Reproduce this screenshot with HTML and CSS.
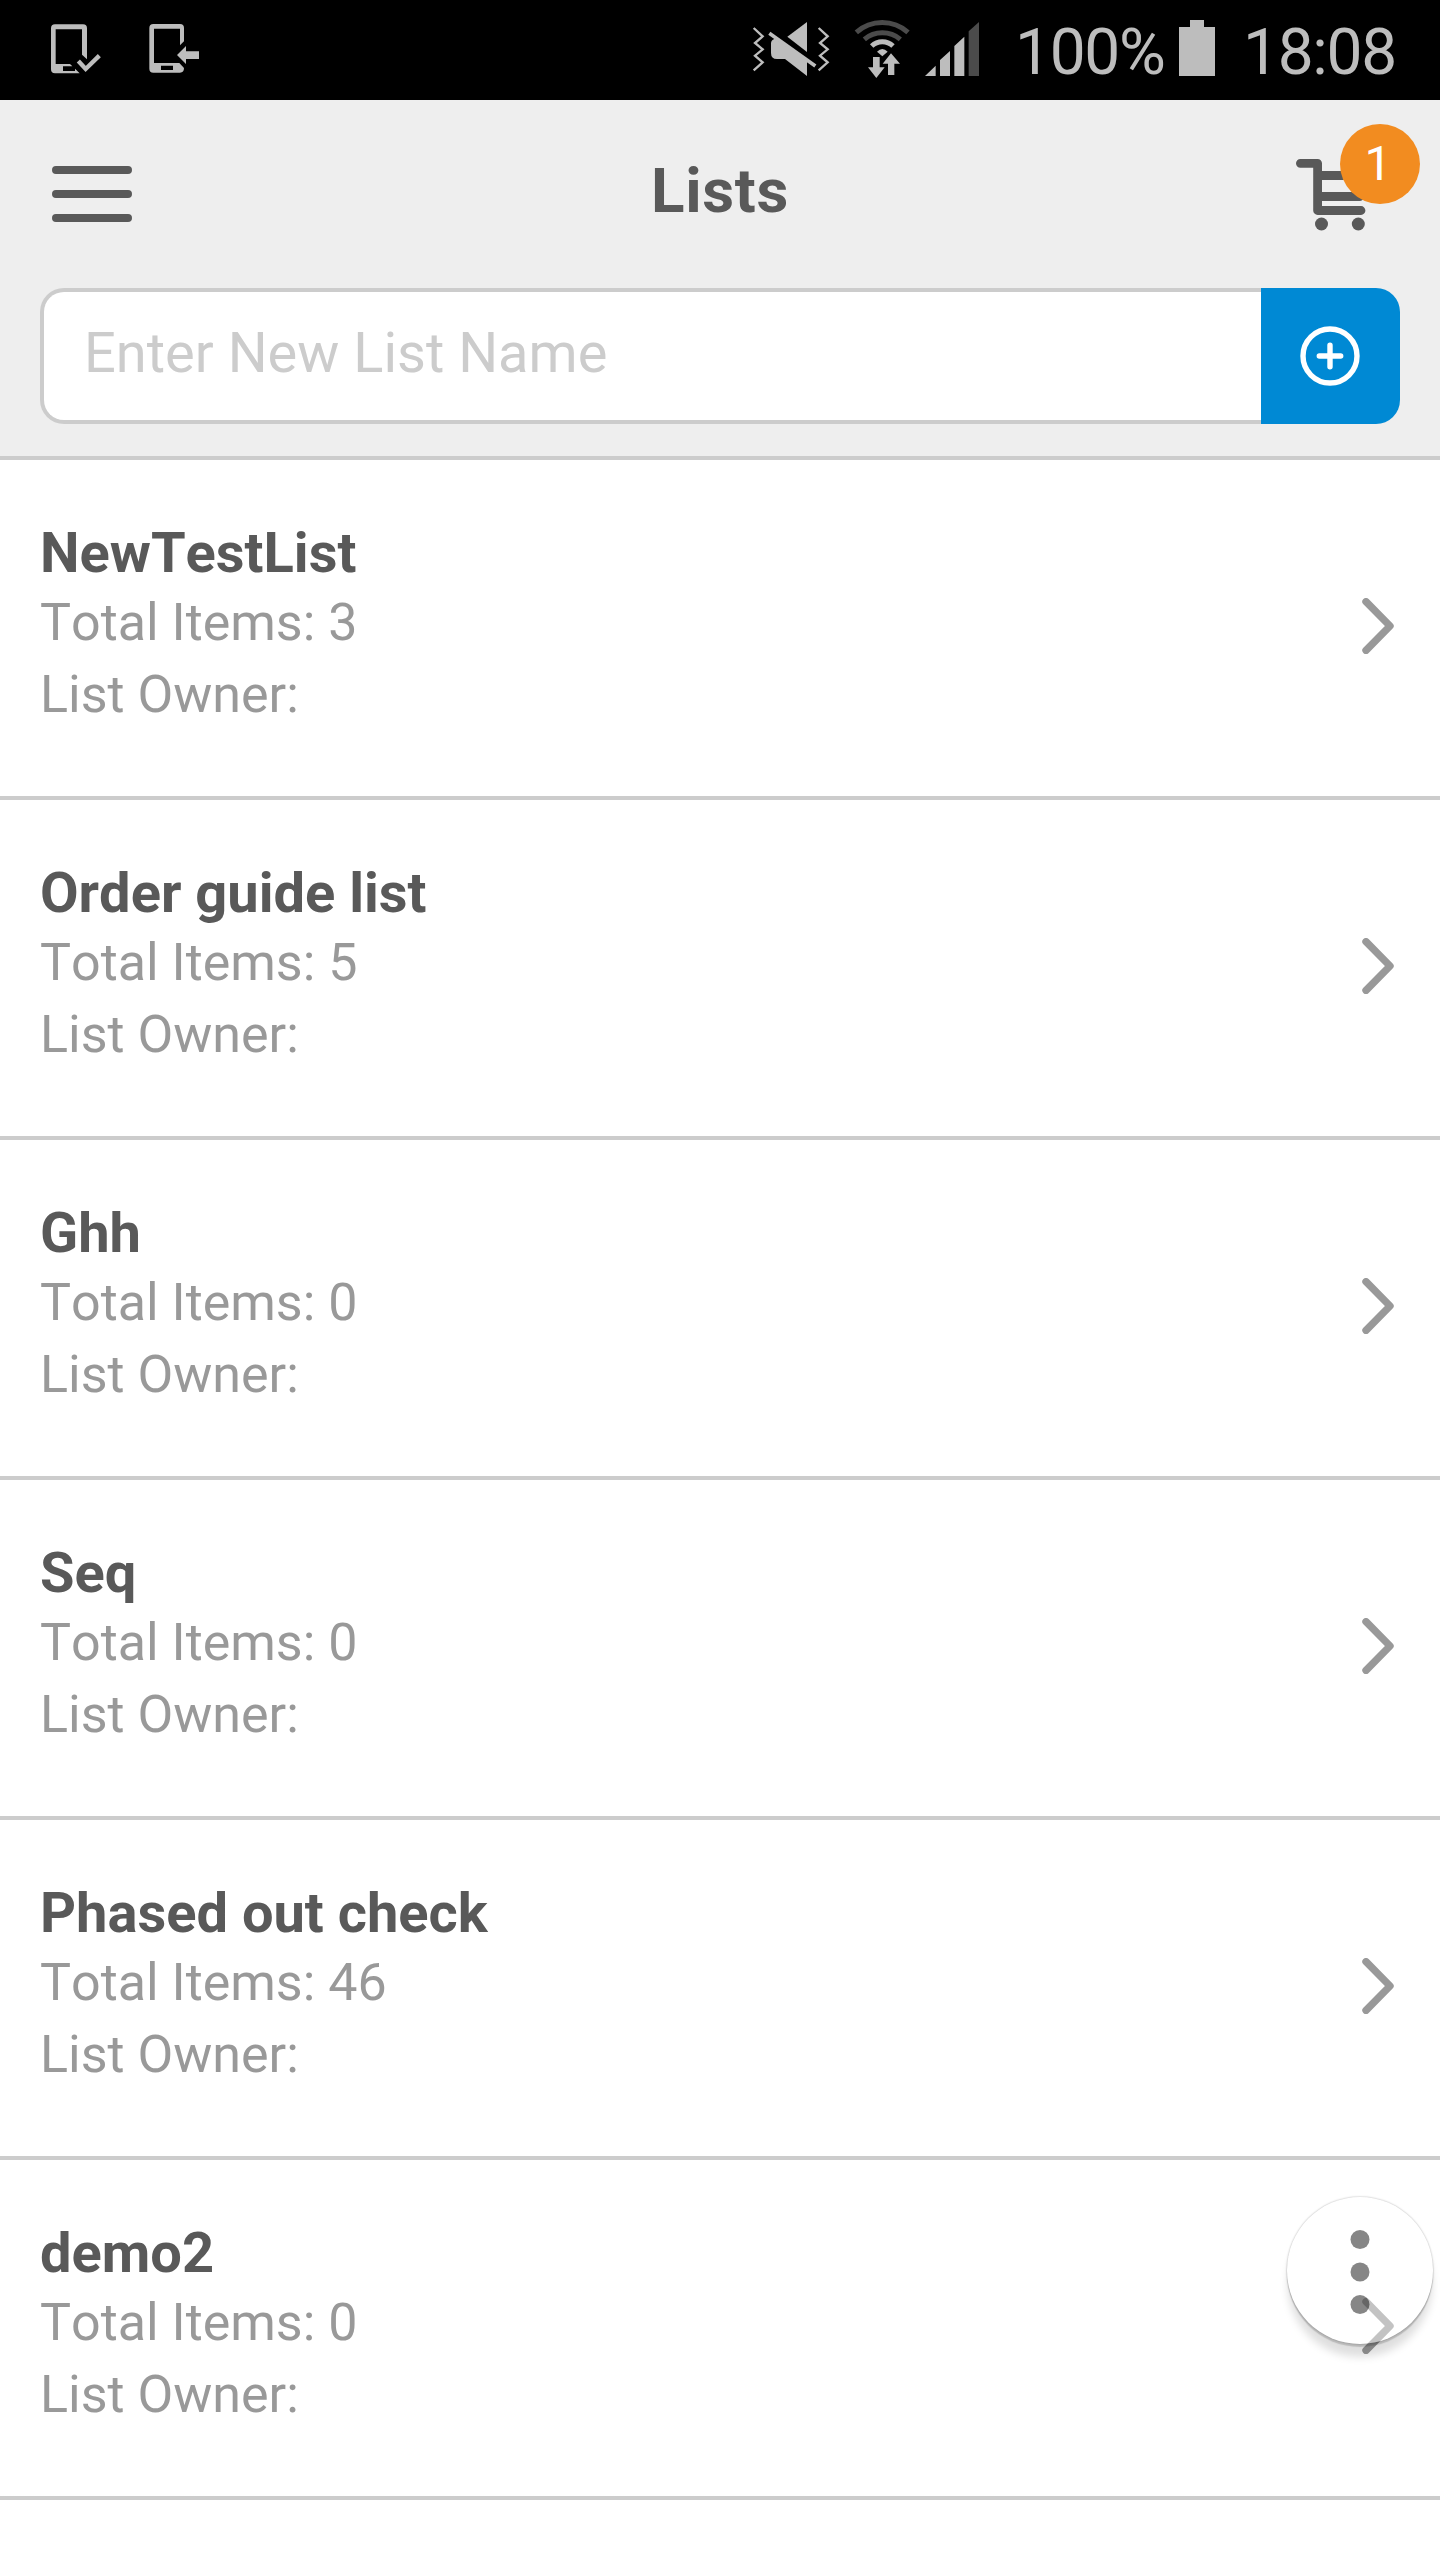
FILE: index.html
```
<!DOCTYPE html>
<html lang="en">
<head>
<meta charset="utf-8">
<title>Lists</title>
<link rel="stylesheet" href="styles.css">
</head>
<body>
<div class="statusbar">
  <svg class="status-icon phone-check" viewBox="150 54 156 186">
    <path fill-rule="evenodd" d="M165 73H249Q261 73 261 85V178L246 164V88H167V192H210L217 199H189V213H225V206L239 220H165Q153 220 153 208V85Q153 73 165 73Z"/>
    <path class="line" stroke-width="13" d="M235 183L257 207L298 167"/>
  </svg>
  <svg class="status-icon phone-arrow" viewBox="444 54 156 186">
    <path fill-rule="evenodd" d="M460 72H540Q552 72 552 84V124L540 136V86H462V189H538L552 204Q552 218 540 218H460Q448 218 448 206V84Q448 72 460 72ZM483 197V210H519V197Z"/>
    <path d="M531 165L558 138V154H597V177H558V192Z"/>
  </svg>
  <svg class="status-icon mute" viewBox="60 54 246 186">
    <path class="line" stroke-width="7" d="M71 84L98 109L75 129L98 148L75 167L98 187L71 211M266 84L293 109L270 129L293 148L270 167L293 187L266 211"/>
    <path d="M172 110L231 66V156Z"/>
    <path d="M135 116L231 182V228L165 177H141Q123 177 123 159V130Q123 119 135 116Z"/>
    <path class="line" stroke-width="11" d="M118 100L256 198"/>
  </svg>
  <svg class="status-icon wifi" viewBox="369 54 174 186">
    <path class="line dim" stroke-width="15" d="M379 97A116 116 0 0 1 534 97M403 118A84 84 0 0 1 511 118"/>
    <path class="line" stroke-width="15" d="M425 138A47 47 0 0 1 489 138"/>
    <path d="M441 155Q457 139 473 155L457 169Z"/>
    <path d="M429 171H449V202H464L439 234L414 202H429ZM483 160L510 191H493V225H474V191H458Z"/>
  </svg>
  <svg class="status-icon signal" viewBox="582 54 168 186">
    <path d="M585 228L617 197V228ZM630 228V180L660 153V228ZM673 228V138L703 110V228Z"/>
    <path class="dim-fill" d="M716 228V94L747 66V228Z"/>
  </svg>
  <span class="battery-level">100%</span>
  <svg class="status-icon battery" viewBox="534 54 114 186">
    <path d="M537 81H570V60H612V81H645V228H537Z"/>
  </svg>
  <span class="clock">18:08</span>
</div>

<header class="header">
  <div class="titlebar">
    <svg class="menu-icon" viewBox="0 0 80 56">
      <path d="M4 4H76M4 28H76M4 52H76"/>
    </svg>
    <h1 class="title">Lists</h1>
    <div class="cart">
      <svg class="cart-icon" viewBox="1296 156 74 76">
        <path class="cart-frame" d="M1300.4 163.3H1317.6V210.5H1361M1318 175.5H1365M1318 196.5H1360"/>
        <circle cx="1321.5" cy="224" r="6.5"/>
        <circle cx="1358.3" cy="224" r="6.5"/>
      </svg>
      <span class="badge">1</span>
    </div>
  </div>
  <form class="new-list">
    <input class="new-list-name" type="text" placeholder="Enter New List Name">
    <button class="add-button" type="button" aria-label="Add list">
      <svg class="add-icon" viewBox="0 0 60 60">
        <circle cx="30" cy="30" r="27"/>
        <path d="M19.3 30H40.7M30 19.3V40.7"/>
      </svg>
    </button>
  </form>
</header>

<main class="lists">
  <article class="row">
    <div><h2 class="name">NewTestList</h2><p class="meta">Total Items: 3</p><p class="meta">List Owner:</p></div>
    <svg class="chevron" viewBox="0 0 32 56"><path d="M4 3.7L28 28L4 52.3"/></svg>
  </article>
  <article class="row">
    <div><h2 class="name">Order guide list</h2><p class="meta">Total Items: 5</p><p class="meta">List Owner:</p></div>
    <svg class="chevron" viewBox="0 0 32 56"><path d="M4 3.7L28 28L4 52.3"/></svg>
  </article>
  <article class="row">
    <div><h2 class="name">Ghh</h2><p class="meta">Total Items: 0</p><p class="meta">List Owner:</p></div>
    <svg class="chevron" viewBox="0 0 32 56"><path d="M4 3.7L28 28L4 52.3"/></svg>
  </article>
  <article class="row">
    <div><h2 class="name">Seq</h2><p class="meta">Total Items: 0</p><p class="meta">List Owner:</p></div>
    <svg class="chevron" viewBox="0 0 32 56"><path d="M4 3.7L28 28L4 52.3"/></svg>
  </article>
  <article class="row">
    <div><h2 class="name">Phased out check</h2><p class="meta">Total Items: 46</p><p class="meta">List Owner:</p></div>
    <svg class="chevron" viewBox="0 0 32 56"><path d="M4 3.7L28 28L4 52.3"/></svg>
  </article>
  <article class="row">
    <div><h2 class="name">demo2</h2><p class="meta">Total Items: 0</p><p class="meta">List Owner:</p></div>
    <svg class="chevron" viewBox="0 0 32 56"><path d="M4 3.7L28 28L4 52.3"/></svg>
  </article>
</main>

<button class="fab" type="button" aria-label="More">
  <svg class="fab-dots" viewBox="0 0 20 86">
    <circle cx="10" cy="10.5" r="9.5"/>
    <circle cx="10" cy="43" r="9.5"/>
    <circle cx="10" cy="75.5" r="9.5"/>
  </svg>
</button>
</body>
</html>
```
FILE: styles.css
```
* { box-sizing: border-box; }

body {
  margin: 0;
  width: 1440px;
  height: 2560px;
  position: relative;
  overflow: hidden;
  background: #fff;
  font-family: Roboto, "Liberation Sans", sans-serif;
  font-kerning: none;
}

h1, h2, p { margin: 0; }

svg { display: block; flex: none; }

/* Status bar */
.statusbar {
  display: flex;
  align-items: flex-start;
  height: 100px;
  padding: 18px 0 0 50px;
  background: #000;
  color: #bdbdbd;
  font-size: 64px;
  line-height: 70px;
  letter-spacing: -1.3px;
}
.status-icon { height: 62px; fill: #bdbdbd; }
.status-icon .line { fill: none; stroke: #bdbdbd; }
.status-icon .dim { stroke: #4b4b4b; }
.status-icon .dim-fill { fill: #4b4b4b; }
.phone-check { width: 52px; }
.phone-arrow { width: 52px; margin-left: 46px; }
.mute { width: 82px; margin-left: auto; }
.wifi { width: 58px; margin-left: 21px; }
.signal { width: 56px; margin-left: 13px; }
.battery-level { width: 163px; margin-left: 35px; }
.battery { width: 38px; }
.clock { width: 197px; margin-left: 27px; }

/* Header */
.header {
  height: 360px;
  background: #eee;
  border-bottom: 4px solid #ccc;
}
.titlebar {
  display: grid;
  grid-template-columns: 1fr auto 1fr;
  align-items: center;
  height: 188px;
  padding: 0 70px 0 52px;
}
.menu-icon {
  width: 80px;
  height: 56px;
  fill: none;
  stroke: #595959;
  stroke-width: 8;
  stroke-linecap: round;
}
.title {
  padding: 0 0 6px 18px;
  color: #595959;
  font-size: 62px;
  line-height: 74px;
  font-weight: 700;
  letter-spacing: 0.7px;
}
.cart { position: relative; justify-self: end; }
.cart-icon { width: 74px; height: 76px; fill: #595959; }
.cart-frame {
  fill: none;
  stroke: #595959;
  stroke-width: 8.8;
  stroke-linecap: round;
  stroke-linejoin: round;
}
.badge {
  position: absolute;
  left: 44px;
  top: -32px;
  width: 80px;
  height: 80px;
  padding-right: 4px;
  border-radius: 50%;
  background: #f28c20;
  color: #fff;
  font-size: 48px;
  line-height: 79px;
  text-align: center;
}

.new-list { display: flex; height: 136px; margin: 0 40px; }
.new-list-name {
  flex: 1;
  min-width: 0;
  margin: 0;
  padding: 0 40px 6px;
  border: 4px solid #ccc;
  border-right: 0;
  border-radius: 24px 0 0 24px;
  background: #fff;
  color: #595959;
  font: 400 56px Roboto, "Liberation Sans", sans-serif;
  font-kerning: none;
}
.new-list-name::placeholder { color: #ccc; opacity: 1; }
.add-button {
  display: flex;
  align-items: center;
  justify-content: center;
  width: 139.5px;
  padding: 0;
  border: 0;
  border-radius: 0 24px 24px 0;
  background: #0089d4;
}
.add-icon {
  width: 60px;
  height: 60px;
  fill: none;
  stroke: #fff;
  stroke-width: 5.4;
  stroke-linecap: round;
}

/* List rows */
.row {
  display: flex;
  justify-content: space-between;
  align-items: flex-start;
  height: 340px;
  padding: 64px 46px 0 40px;
  border-bottom: 4px solid #ccc;
}
.name {
  margin-bottom: 5px;
  color: #595959;
  font-size: 56px;
  line-height: 58px;
  font-weight: 700;
}
.meta { color: #999; font-size: 52px; line-height: 72px; }
.chevron {
  width: 32px;
  height: 56px;
  margin-top: 73.5px;
  fill: none;
  stroke: #999;
  stroke-width: 7.4;
  stroke-linecap: round;
  stroke-linejoin: round;
}

/* Floating action button */
.fab {
  position: absolute;
  left: 1287px;
  top: 2197px;
  display: flex;
  align-items: center;
  justify-content: center;
  width: 146px;
  height: 147px;
  padding: 3px 0 0;
  border: 0;
  border-radius: 50%;
  background: rgba(255, 255, 255, 0.41);
  box-shadow:
    0 14px 8px -1px rgba(0, 0, 0, 0.13),
    0 3px 1px rgba(0, 0, 0, 0.16),
    0 0 2px rgba(0, 0, 0, 0.35);
}
.fab-dots { width: 20px; height: 86px; fill: rgba(0, 0, 0, 0.475); }
```
